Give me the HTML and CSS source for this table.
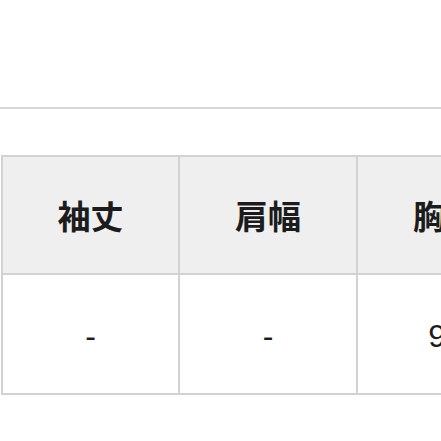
FILE: index.html
```html
<!DOCTYPE html>
<html lang="ja">
<head>
<meta charset="utf-8">
<link rel="stylesheet" href="styles.css">
</head>
<body>
<div class="rule"></div>
<table class="size-table">
  <thead>
    <tr>
      <th class="c1">袖丈</th>
      <th class="c2">肩幅</th>
      <th class="c3">胸囲</th>
    </tr>
  </thead>
  <tbody>
    <tr>
      <td class="c1">-</td>
      <td class="c2">-</td>
      <td class="c3">92</td>
    </tr>
  </tbody>
</table>
</body>
</html>
```
FILE: styles.css
```css
html, body {
  margin: 0;
  padding: 0;
  background: #ffffff;
  overflow: hidden;
  width: 441px;
  height: 441px;
}

.rule {
  margin-top: 107px;
  border-top: 2px solid #d8d8d8;
  width: 100%;
}

.size-table {
  width: 535px;
  min-width: 535px;
  margin-top: 46px;
  margin-left: 1px;
  border-collapse: separate;
  border-spacing: 0;
  border-top: 2px solid #d2d2d2;
  border-left: 2px solid #d2d2d2;
  table-layout: fixed;
  color: #1c1c1c;
}

.size-table th,
.size-table td {
  padding: 0;
  text-align: center;
  vertical-align: middle;
  border-right: 2px solid #d2d2d2;
  border-bottom: 2px solid #d2d2d2;
}

.size-table th {
  height: 116px;
  background: #efefef;
  font-family: "Noto Sans CJK JP", "Noto Sans", sans-serif;
  font-weight: 700;
  font-size: 33px;
}

.size-table td {
  height: 114px;
  background: #ffffff;
  font-family: "Liberation Sans", Arial, sans-serif;
  font-weight: 400;
  font-size: 32px;
  padding-top: 4px;
}

.c1 { width: 175px; }
.c2 { width: 176px; }
.c3 { width: 176px; }
```
